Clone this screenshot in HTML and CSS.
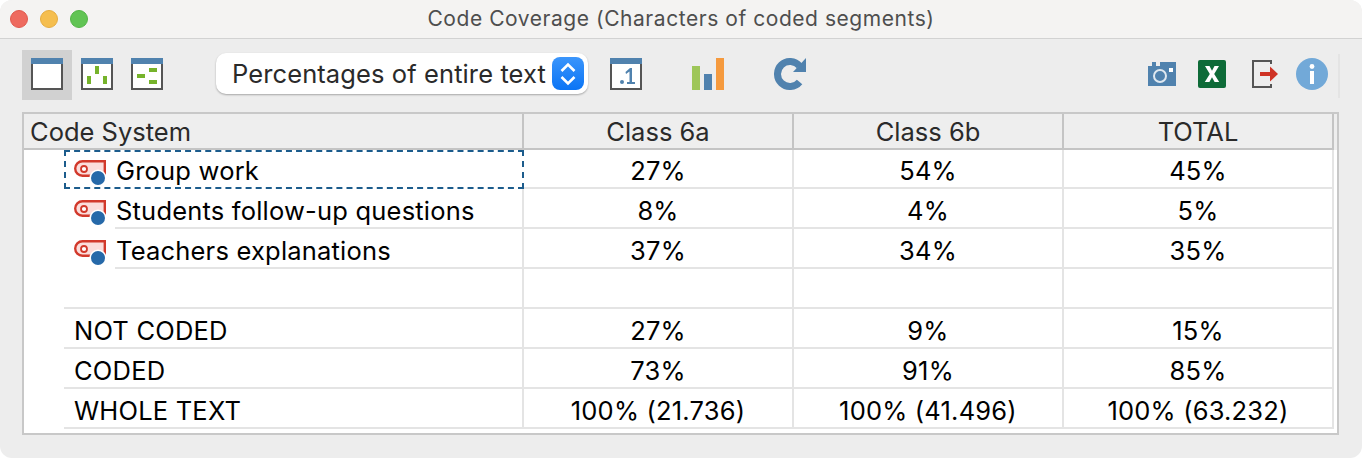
FILE: index.html
```html
<!DOCTYPE html>
<html lang="en">
<head>
    <meta charset="UTF-8">
    <title>Code Coverage (Characters of coded segments)</title>
    <link rel="stylesheet" href="styles.css">
</head>
<body>
    <div class="window">
        <div class="titlebar">
            <div class="lights">
                <span class="light red"></span>
                <span class="light yellow"></span>
                <span class="light green"></span>
            </div>
            <div class="title">Code Coverage (Characters of coded segments)</div>
        </div>

        <div class="toolbar">
            <div class="tool-btn active">
                <svg width="32" height="32" viewBox="0 0 32 32"><rect x="1" y="1" width="30" height="30" fill="#fff" stroke="#555" stroke-width="2"/><rect width="32" height="6" fill="#5082ae"/></svg>
            </div>
            <div class="tool-btn">
                <svg width="32" height="32" viewBox="0 0 32 32"><rect x="1" y="1" width="30" height="30" fill="#fff" stroke="#555" stroke-width="2"/><rect width="32" height="6" fill="#5082ae"/><rect x="6" y="18" width="4" height="8" fill="#76b32b"/><rect x="14" y="8" width="4" height="8" fill="#76b32b"/><rect x="22" y="18" width="4" height="8" fill="#76b32b"/></svg>
            </div>
            <div class="tool-btn">
                <svg width="32" height="32" viewBox="0 0 32 32"><rect x="1" y="1" width="30" height="30" fill="#fff" stroke="#555" stroke-width="2"/><rect width="32" height="6" fill="#5082ae"/><rect x="6" y="16" width="8" height="4" fill="#76b32b"/><rect x="18" y="10" width="8" height="4" fill="#76b32b"/><rect x="18" y="22" width="8" height="4" fill="#76b32b"/></svg>
            </div>

            <div class="popup">
                <span class="popup-label">Percentages of entire text</span>
                <span class="stepper">
                    <svg width="20" height="26" viewBox="0 0 20 26"><path d="M3.5 10 L10 3.5 L16.5 10 M3.5 16 L10 22.5 L16.5 16" fill="none" stroke="#fff" stroke-width="2.6"/></svg>
                </span>
            </div>

            <svg class="decimals" width="32" height="32" viewBox="0 0 32 32"><rect x="1" y="1" width="30" height="30" fill="#fff" stroke="#555" stroke-width="2"/><rect width="32" height="6" fill="#5082ae"/><circle cx="12" cy="24" r="2" fill="#5082ae"/><path d="M15.5 14 L20 10 H22 V24 H25 V26 H17 V24 H19.5 V13.5 L16 16 Z" fill="#5082ae"/></svg>

            <svg class="bars" width="32" height="32" viewBox="0 0 32 32"><rect y="8" width="8" height="24" fill="#9ec659"/><rect x="12" y="16" width="8" height="16" fill="#5082ae"/><rect x="24" width="8" height="32" fill="#f59a3e"/></svg>

            <svg class="refresh" width="32" height="32" viewBox="0 0 32 32"><path d="M25.6 24 A12.5 12.5 0 1 1 25.6 8" fill="none" stroke="#5082ae" stroke-width="7"/><path d="M32 0 V14 H19 Z" fill="#5082ae"/></svg>

            <div class="tools-right">
                <svg width="28" height="24" viewBox="0 0 28 24"><path d="M0 4 H4 V0 H8 V4 H12 V0 H28 V24 H0 Z" fill="#5082ae"/><circle cx="12" cy="14" r="6" fill="none" stroke="#dfe8f0" stroke-width="2"/><rect x="21" y="6" width="4" height="4" fill="#fff"/></svg>
                <svg width="28" height="28" viewBox="0 0 28 28"><rect width="28" height="28" rx="2" fill="#0e6b38"/><path d="M7 6 H11.5 L14 10.8 L16.5 6 H21 L16.2 14 L21.2 22 H16.6 L14 17.2 L11.4 22 H6.8 L11.8 14 Z" fill="#fff"/></svg>
                <svg class="export" width="26" height="28" viewBox="0 0 26 28"><path d="M19 4 V1 H1 V27 H19 V24" fill="none" stroke="#555" stroke-width="2"/><rect x="8" y="12" width="10" height="4" fill="#cf3325"/><path d="M18 6.5 L26 14 L18 21.5 Z" fill="#cf3325"/></svg>
                <svg width="32" height="32" viewBox="0 0 32 32"><circle cx="16" cy="16" r="16" fill="#72a9d8"/><circle cx="16" cy="8.5" r="2.4" fill="#fff"/><rect x="14" y="13" width="4" height="13" fill="#fff"/></svg>
            </div>
        </div>

        <div class="table">
            <div class="row head">
                <div class="cell name">Code System</div>
                <div class="cell">Class 6a</div>
                <div class="cell">Class 6b</div>
                <div class="cell">TOTAL</div>
            </div>
            <div class="row selected">
                <div class="cell name coded"><svg class="code-icon" width="34" height="28" viewBox="0 0 34 28"><use href="#code"/></svg><span>Group work</span></div>
                <div class="cell">27%</div>
                <div class="cell">54%</div>
                <div class="cell">45%</div>
            </div>
            <div class="row">
                <div class="cell name coded"><svg class="code-icon" width="34" height="28" viewBox="0 0 34 28"><use href="#code"/></svg><span>Students follow-up questions</span></div>
                <div class="cell">8%</div>
                <div class="cell">4%</div>
                <div class="cell">5%</div>
            </div>
            <div class="row">
                <div class="cell name coded"><svg class="code-icon" width="34" height="28" viewBox="0 0 34 28"><use href="#code"/></svg><span>Teachers explanations</span></div>
                <div class="cell">37%</div>
                <div class="cell">34%</div>
                <div class="cell">35%</div>
            </div>
            <div class="row">
                <div class="cell name"></div>
                <div class="cell"></div>
                <div class="cell"></div>
                <div class="cell"></div>
            </div>
            <div class="row">
                <div class="cell name">NOT CODED</div>
                <div class="cell">27%</div>
                <div class="cell">9%</div>
                <div class="cell">15%</div>
            </div>
            <div class="row">
                <div class="cell name">CODED</div>
                <div class="cell">73%</div>
                <div class="cell">91%</div>
                <div class="cell">85%</div>
            </div>
            <div class="row">
                <div class="cell name">WHOLE TEXT</div>
                <div class="cell">100% (21.736)</div>
                <div class="cell">100% (41.496)</div>
                <div class="cell">100% (63.232)</div>
            </div>
        </div>
    </div>

    <svg width="0" height="0" class="defs">
        <defs>
            <g id="code">
                <path d="M8.5 4.2 H30.8 V18.8 H8.5 A7.3 7.3 0 0 1 8.5 4.2 Z" fill="#fbdddb" stroke="#d2392b" stroke-width="2.4"/>
                <circle cx="10" cy="12" r="3" fill="#fff" stroke="#d2392b" stroke-width="1.8"/>
                <circle cx="24" cy="21" r="8.6" fill="#fff"/>
                <circle cx="24" cy="21" r="7" fill="#2669a9"/>
            </g>
        </defs>
    </svg>
</body>
</html>
```

FILE: styles.css
```css
html, body {
    margin: 0;
    padding: 0;
    background-color: #fff;
}
body {
    font-family: Inter, "Liberation Sans", sans-serif;
    color: #000;
}
.defs {
    position: absolute;
}
.window {
    width: 1362px;
    height: 458px;
    background-color: #ededed;
    border-radius: 12px;
    overflow: hidden;
    display: flex;
    flex-direction: column;
}
.titlebar {
    height: 38px;
    flex-shrink: 0;
    background-color: #f4f3f2;
    border-bottom: 1px solid #d2d2d2;
    display: flex;
    align-items: center;
    position: relative;
}
.lights {
    display: flex;
    gap: 12px;
    padding-left: 10px;
}
.light {
    width: 18px;
    height: 18px;
    border-radius: 50%;
    box-sizing: border-box;
}
.red { background-color: #ee6a5f; border: 1px solid #e0584d; }
.yellow { background-color: #f5be4f; border: 1px solid #e5ac40; }
.green { background-color: #61c454; border: 1px solid #53b447; }
.title {
    position: absolute;
    left: 0;
    right: 0;
    padding-bottom: 2px;
    text-align: center;
    font-size: 21px;
    letter-spacing: 0.55px;
    color: #4e4e4e;
}
.toolbar {
    height: 73px;
    box-sizing: border-box;
    flex-shrink: 0;
    display: flex;
    align-items: center;
    padding: 0 22px 3px 22px;
}
.tool-btn {
    width: 50px;
    height: 50px;
    box-sizing: border-box;
    margin-top: 2px;
    padding-bottom: 2px;
    display: flex;
    align-items: center;
    justify-content: center;
}
.tool-btn.active {
    background-color: #d1d1d1;
}
.popup {
    width: 372px;
    height: 41px;
    box-sizing: border-box;
    margin-left: 44px;
    margin-right: 22px;
    margin-bottom: 1px;
    padding: 0 4px 0 16px;
    background-color: #fff;
    border-radius: 10px;
    box-shadow: 0 1px 2px rgba(0, 0, 0, 0.3);
    display: flex;
    align-items: center;
    justify-content: space-between;
    font-size: 25.5px;
    letter-spacing: 0.1px;
    color: #2a2a2a;
}
.stepper {
    width: 32px;
    height: 33px;
    border-radius: 8px;
    background: linear-gradient(#3b95fb, #0a74f5);
    display: flex;
    align-items: center;
    justify-content: center;
}
.bars {
    margin-left: 50px;
}
.refresh {
    margin-left: 50px;
}
.tools-right {
    margin-left: auto;
    margin-top: 4px;
    display: flex;
    align-items: center;
    gap: 22px;
    padding-right: 10px;
    padding-bottom: 4px;
    box-sizing: border-box;
    border-right: 2px solid #e4e4e4;
    height: 44px;
}
.export {
    margin-left: 4px;
    margin-right: -4px;
}
.table {
    margin: 0 23px 0 22px;
    height: 323px;
    box-sizing: border-box;
    border: 2px solid #c8c8c8;
    background-color: #fff;
    font-size: 25.5px;
    letter-spacing: 0.2px;
}
.row {
    height: 40px;
    display: grid;
    grid-template-columns: 500px 270px 270px 270px;
}
.cell {
    box-sizing: border-box;
    padding-top: 4px;
    display: flex;
    align-items: center;
    justify-content: center;
    border-right: 2px solid #e4e4e4;
    border-bottom: 2px solid #e4e4e4;
}
.cell.name {
    justify-content: flex-start;
    margin-left: 40px;
    padding-left: 10px;
}
.cell.coded {
    padding-top: 0;
    border-bottom: 0;
    align-items: stretch;
}
.cell.coded span {
    flex: 1;
    display: flex;
    align-items: center;
    padding: 4px 0 0 1px;
    border-bottom: 2px solid #e4e4e4;
}
.code-icon {
    flex-shrink: 0;
    align-self: center;
    margin-top: 4px;
    margin-right: 7px;
}
.row.head {
    height: 36px;
    background-color: #eeeeee;
    color: #2a2a2a;
    letter-spacing: 0;
}
.head .cell {
    padding-top: 1px;
    border-right-color: #c4c4c4;
    border-bottom-color: #c4c4c4;
}
.head .cell.name {
    margin-left: 0;
    padding-left: 6px;
}
.row.selected {
    height: 39px;
}
.selected .cell {
    padding-top: 3px;
}
.selected .cell.name {
    padding-top: 0;
    padding-left: 8px;
    border: 2px dashed #1c5c8c;
}
.selected .cell.coded span {
    padding-top: 1px;
    border-bottom: 0;
}
.selected .code-icon {
    margin-top: 3px;
}
```
